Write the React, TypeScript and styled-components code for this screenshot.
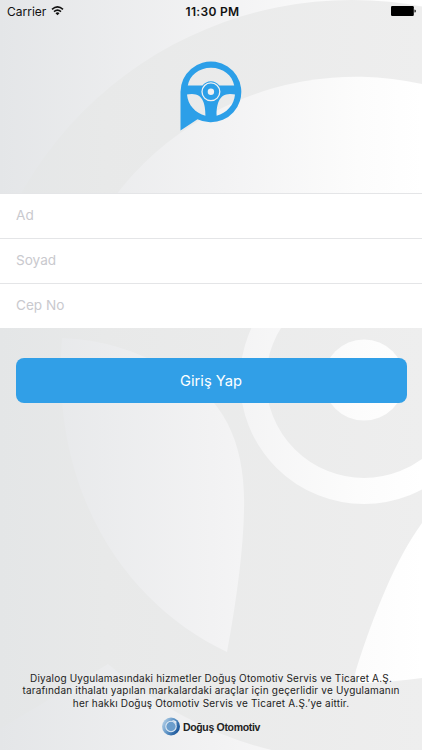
import React from "react";
import styled, { createGlobalStyle } from "styled-components";

const GlobalStyle = createGlobalStyle`
  * { box-sizing: border-box; }
  body { margin: 0; font-family: Inter, "Liberation Sans", sans-serif; }
`;

const Screen = styled.main`
  position: relative;
  isolation: isolate;
  display: flex;
  flex-direction: column;
  width: 422px;
  height: 750px;
  overflow: hidden;
`;

const Backdrop = styled.svg`
  position: absolute;
  inset: 0;
  z-index: -1;
`;

const StatusBar = styled.header`
  display: grid;
  grid-template-columns: 1fr auto 1fr;
  align-items: center;
  height: 22px;
  padding: 0 6px 0 7px;
  color: #111;
  font-size: 12px;
`;

const Carrier = styled.div`
  display: flex;
  align-items: center;
  gap: 5px;
`;

const Clock = styled.time`
  padding-left: 2px;
  font-weight: 600;
  letter-spacing: 0.32px;
`;

const Battery = styled.svg`
  justify-self: end;
`;

const Brand = styled.div`
  display: flex;
  justify-content: center;
  height: 171px;
  padding-top: 39px;
`;

const Form = styled.form`
  display: flex;
  flex-direction: column;
`;

const Field = styled.input`
  height: 45px;
  padding: 0 16px 2px;
  border: 0;
  border-top: 1px solid #e4e5e7;
  border-radius: 0;
  outline: 0;
  background: #fff;
  font: 13.6px Inter, sans-serif;
  &::placeholder { color: #c9c9ce; opacity: 1; }
`;

const SubmitButton = styled.button`
  height: 45px;
  margin: 30px 15.5px 0;
  border: 0;
  border-radius: 8px;
  background: #319fe7;
  color: #fff;
  font: 14.7px Inter, sans-serif;
`;

const Footer = styled.footer`
  display: flex;
  flex-direction: column;
  align-items: center;
  margin-top: auto;
  padding-bottom: 14px;
`;

const Legal = styled.p`
  margin: 0;
  color: #222;
  font-size: 10px;
  line-height: 12.3px;
  text-align: center;
`;

const LegalLine = styled.span`
  display: block;
  white-space: nowrap;
  letter-spacing: 0.19px;
`;

const Company = styled.div`
  display: flex;
  align-items: center;
  gap: 3px;
  height: 19px;
  margin-top: 8px;
  color: #222;
  font: bold 10.5px "Liberation Sans", sans-serif;
  letter-spacing: -0.32px;
`;

const WheelBackdrop = () => (
  <Backdrop width="422" height="750" viewBox="0 0 422 750" aria-hidden="true">
    <defs>
      <linearGradient id="paper" gradientUnits="userSpaceOnUse" x1="0" y1="0" x2="422" y2="0">
        <stop offset="0" stopColor="#e4e6e8" />
        <stop offset="0.5" stopColor="#f2f2f3" />
        <stop offset="0.85" stopColor="#fcfcfc" />
        <stop offset="1" stopColor="#fff" />
      </linearGradient>
      <linearGradient id="wheel" gradientUnits="userSpaceOnUse" x1="0" y1="0" x2="422" y2="0">
        <stop offset="0" stopColor="#e4e6e7" />
        <stop offset="0.25" stopColor="#e8e9e9" />
        <stop offset="1" stopColor="#eeeeee" />
      </linearGradient>
    </defs>
    <rect width="422" height="750" fill="url(#paper)" />
    <path d="M-28 380A380 380 0 1 1 352 760Q218 758 108 664L-28 746Z" fill="url(#wheel)" />
    <path d="M59 320A303 303 0 0 1 422 84V320Z" fill="url(#paper)" />
    <path d="M62 338Q120 340 172 371C226 396 246 447 244 510Q243 565 227 652C128 605 50 496 62 338Z" fill="url(#paper)" />
    <path d="M422 523C395 560 374 614 356 670Q352 684 364 683Q394 682 422 678Z" fill="url(#paper)" />
    <circle cx="364" cy="380" r="111" fill="none" stroke="url(#paper)" strokeWidth="26" />
    <circle cx="364" cy="380" r="40.5" fill="url(#paper)" />
  </Backdrop>
);

const WheelLogo = () => (
  <svg width="62" height="70" viewBox="180 61 62 70" role="img" aria-label="Diyalog">
    <path
      fill="#2c9fe8"
      fillRule="evenodd"
      d="M180.5 130.5V92A30.4 30.4 0 1 1 197.5 119.2Z
      M187.8 85.6H202.5A10.4 10.4 0 0 1 219.3 85.6H234.2C232.5 75.5 223.3 67.7 211 67.7S189.5 75.5 187.8 85.6Z
      M187 94.5C187.8 105 195.5 113.2 205.4 115.8C205.5 105.5 203.5 94 192 94Q188 94 187 94.5Z
      M235 94.5C234.2 105 226.5 113.2 216.6 115.8C216.5 105.5 218.5 94 230 94Q234 94 235 94.5Z"
    />
    <circle cx="210.9" cy="91.8" r="8.9" fill="#2c9fe8" stroke="#f1f1f1" strokeWidth="1.3" />
    <circle cx="210.9" cy="91.8" r="3.2" fill="#f1f1f1" />
  </svg>
);

const WifiIcon = () => (
  <svg width="13" height="10" viewBox="0 0 12 10" aria-hidden="true">
    <g fill="none" stroke="#111" strokeWidth="1.6">
      <path d="M.5 3.3Q6 -1.5 11.5 3.3" />
      <path d="M2.5 5.6Q6 2.5 9.5 5.6" />
    </g>
    <path d="M4 7.2Q6 5.4 8 7.2L6 9.3Z" fill="#111" />
  </svg>
);

const CompanyEmblem = () => (
  <svg width="18" height="19" viewBox="0 0 18 19" aria-hidden="true">
    <defs>
      <linearGradient id="emblem" x1="0" y1="0.2" x2="1" y2="0.75">
        <stop offset="0" stopColor="#b9d3e9" />
        <stop offset="0.5" stopColor="#5b91c4" />
        <stop offset="1" stopColor="#104c93" />
      </linearGradient>
    </defs>
    <circle cx="9" cy="9.5" r="9" fill="url(#emblem)" />
    <circle cx="9" cy="9.5" r="5.2" fill="#6b9dcc" stroke="#dfeaf5" strokeWidth="1.1" />
    <path d="M10.5 4Q14 5 14.4 8.5V4.5Q12.8 3 10.5 3Z" fill="#e4edf6" />
  </svg>
);

const fields = ["Ad", "Soyad", "Cep No"];

const legalLines = [
  "Diyalog Uygulamasındaki hizmetler Doğuş Otomotiv Servis ve Ticaret A.Ş.",
  "tarafından ithalatı yapılan markalardaki araçlar için geçerlidir ve Uygulamanın",
  "her hakkı Doğuş Otomotiv Servis ve Ticaret A.Ş.’ye aittir.",
];

export default function App() {
  return (
    <>
      <GlobalStyle />
      <Screen>
        <WheelBackdrop />
        <StatusBar>
          <Carrier>
            Carrier
            <WifiIcon />
          </Carrier>
          <Clock>11:30 PM</Clock>
          <Battery width="25" height="10" viewBox="0 0 25 10" aria-hidden="true">
            <rect width="22.8" height="10" rx="1.2" fill="#000" />
            <path d="M23.5 3.5Q24.8 3.5 24.8 5T23.5 6.5Z" fill="#000" />
          </Battery>
        </StatusBar>
        <Brand>
          <WheelLogo />
        </Brand>
        <Form onSubmit={(event) => event.preventDefault()}>
          {fields.map((label) => (
            <Field key={label} placeholder={label} aria-label={label} />
          ))}
          <SubmitButton type="submit">Giriş Yap</SubmitButton>
        </Form>
        <Footer>
          <Legal>
            {legalLines.map((line) => (
              <LegalLine key={line}>{line}</LegalLine>
            ))}
          </Legal>
          <Company>
            <CompanyEmblem />
            Doğuş Otomotiv
          </Company>
        </Footer>
      </Screen>
    </>
  );
}
